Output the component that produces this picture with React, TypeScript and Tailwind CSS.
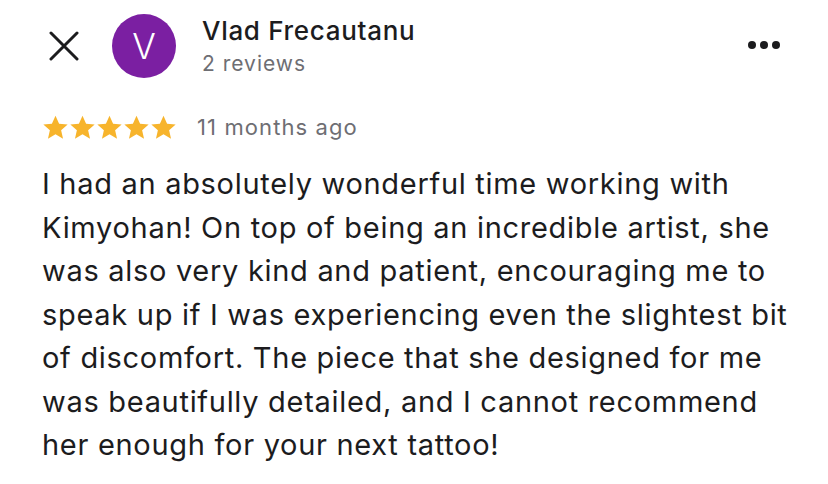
const lines = [
  "I had an absolutely wonderful time working with",
  "Kimyohan! On top of being an incredible artist, she",
  "was also very kind and patient, encouraging me to",
  "speak up if I was experiencing even the slightest bit",
  "of discomfort. The piece that she designed for me",
  "was beautifully detailed, and I cannot recommend",
  "her enough for your next tattoo!",
];

function Star() {
  return (
    <svg width="27" height="26" viewBox="0 0 24 23" className="fill-[#f7b42c]">
      <path d="M12 .6l3.2 7.1 7.6.7-5.8 5.1 1.7 7.6L12 17.1l-6.7 4 1.7-7.6L1.2 8.4l7.6-.7z" />
    </svg>
  );
}

export default function App() {
  return (
    <div
      className="h-[484px] w-[828px] bg-white text-[#1c1c1e]"
      style={{ fontFamily: "Inter, 'Noto Sans', sans-serif" }}
    >
      <div className="flex items-start px-[42px] pt-[14px]">
        <div className="flex h-[64px] w-[42px] items-center">
          <svg width="30" height="30" viewBox="0 0 30 30" className="ml-[7px] stroke-[#1c1c1e]">
            <path d="M2 2L28 28M28 2L2 28" strokeWidth="3" strokeLinecap="round" />
          </svg>
        </div>
        <div className="ml-[28px] flex h-[64px] w-[64px] items-center justify-center rounded-full bg-[#7b1fa2] text-[35px] font-light text-white">
          V
        </div>
        <div className="ml-[26px] flex-1 pt-[1px]">
          <p className="text-[26px] font-medium leading-[32px] tracking-[0.7px]">Vlad Frecautanu</p>
          <p className="mt-[3px] text-[21px] leading-[28px] tracking-[1px] text-[#6e6e73]">2 reviews</p>
        </div>
        <div className="flex gap-[4px] pt-[27px] pr-[6px]">
          <span className="h-[8px] w-[8px] rounded-full bg-[#1c1c1e]" />
          <span className="h-[8px] w-[8px] rounded-full bg-[#1c1c1e]" />
          <span className="h-[8px] w-[8px] rounded-full bg-[#1c1c1e]" />
        </div>
      </div>
      <div className="mt-[33px] flex items-center px-[42px]">
        <div className="flex">
          <Star />
          <Star />
          <Star />
          <Star />
          <Star />
        </div>
        <span className="ml-[20px] text-[22px] tracking-[1.1px] text-[#6e6e73]">11 months ago</span>
      </div>
      <div className="mt-[18px] px-[42px] text-[29px] leading-[43.5px] tracking-[0.7px] text-[#1c1c1e]">
        {lines.map((line) => (
          <p key={line} className="whitespace-nowrap">
            {line}
          </p>
        ))}
      </div>
    </div>
  );
}
